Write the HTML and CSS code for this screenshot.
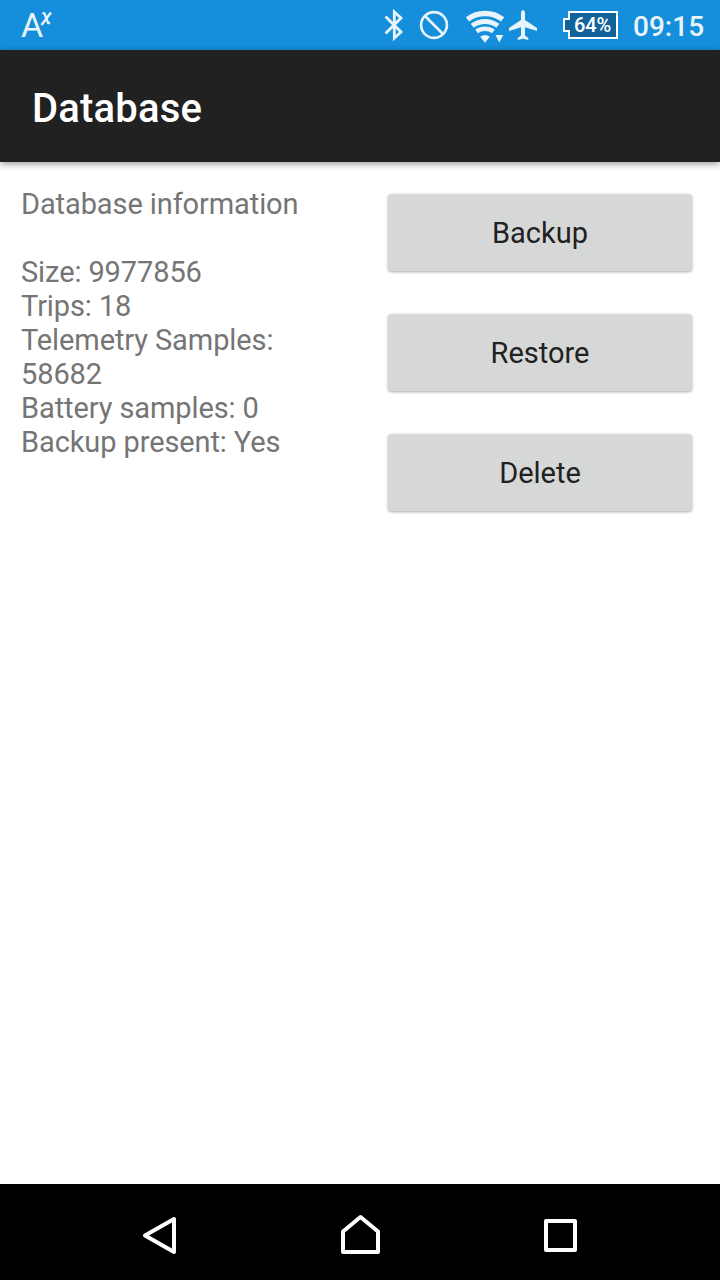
FILE: index.html
```
<!DOCTYPE html>
<html lang="en">
<head>
    <meta charset="UTF-8">
    <meta name="viewport" content="width=device-width, initial-scale=1.0">
    <title>Database</title>
    <link rel="stylesheet" href="styles.css">
</head>
<body>

<!-- Status Bar -->
<div class="statusbar">
    <svg class="notification" width="34" height="50" viewBox="0 0 34 50">
        <text class="letter" x="0" y="37">A</text>
        <path class="mark" d="M21.5 12.8 L23.5 13.5 L27 22.8 L29 23.2 M30 12.5 L20.5 25"/>
    </svg>
    <svg class="bluetooth" width="20" height="50" viewBox="0 0 20 50">
        <path d="M1.5 16.5 L17 32 L10.3 38 V12 L17 18 L1.5 33.5"/>
    </svg>
    <svg class="blocked" width="30" height="50" viewBox="0 0 30 50">
        <circle cx="15" cy="25" r="12.9"/>
        <path d="M6 16 L24 34"/>
    </svg>
    <svg class="wifi" width="40" height="50" viewBox="0 0 40 50">
        <path class="arc" stroke-width="5.4" d="M2.4 19.4 A29.2 29.2 0 0 1 37.6 19.4"/>
        <path class="arc" stroke-width="5" d="M7.2 25.7 A21.3 21.3 0 0 1 32.8 25.7"/>
        <path class="arc" stroke-width="4.6" d="M11.6 31.5 A14 14 0 0 1 28.4 31.5"/>
        <path d="M20 42.7 L15.2 36.8 A7.7 7.7 0 0 1 24.8 36.8 Z"/>
        <path d="M30.5 35 H38.2 L34.3 42.5 Z"/>
    </svg>
    <svg class="plane" width="30" height="50" viewBox="0 0 30 50">
        <path d="M13 12 Q15 8 17 12 V20 L29 28 V31 L17 27.3 V35.5 L20.3 38 V40 L15 38.8 L9.7 40 V38 L13 35.5 V27.3 L1 31 V28 L13 20 Z"/>
    </svg>
    <svg class="battery" width="56" height="50" viewBox="0 0 56 50">
        <path d="M6 12 H54 V38 H6 V31 H1 V19 H6 Z"/>
        <text x="29.5" y="32">64%</text>
    </svg>
    <span class="clock">09:15</span>
</div>

<!-- Title Bar -->
<div class="toolbar">
    <h1>Database</h1>
</div>

<!-- Database Section -->
<div class="container">
    <div class="info">
        Database information<br>
        <br>
        Size: 9977856<br>
        Trips: 18<br>
        Telemetry Samples: 58682<br>
        Battery samples: 0<br>
        Backup present: Yes
    </div>
    <div class="actions">
        <button class="btn">Backup</button>
        <button class="btn">Restore</button>
        <button class="btn">Delete</button>
    </div>
</div>

<!-- Navigation Bar -->
<div class="navbar">
    <svg width="40" height="44" viewBox="0 0 40 44">
        <path d="M34 6 V39 L5 22.5 Z"/>
    </svg>
    <svg width="40" height="44" viewBox="0 0 40 44">
        <path d="M3 18.5 L20.5 4 L38 18.5 V39 H3 Z"/>
    </svg>
    <svg width="40" height="44" viewBox="0 0 40 44">
        <path d="M6 8 H35 V37 H6 Z"/>
    </svg>
</div>

</body>
</html>
```

FILE: styles.css
```
body {
    font-family: Roboto, sans-serif;
    background-color: white;
    margin: 0;
    height: 1280px;
    display: flex;
    flex-direction: column;
    overflow: hidden;
}

.statusbar {
    display: flex;
    height: 50px;
    background-color: #158edb;
    color: #e8f4fc;
}
.statusbar svg {
    flex: none;
    fill: #e8f4fc;
}
.statusbar .notification {
    margin-left: 21px;
    margin-right: auto;
}
.notification .letter {
    font-size: 34px;
}
.notification .mark {
    fill: none;
    stroke: #e8f4fc;
    stroke-width: 2.4;
}
.statusbar .bluetooth {
    fill: none;
    stroke: #e8f4fc;
    stroke-width: 2.8;
    margin-right: 15px;
}
.statusbar .blocked {
    fill: none;
    stroke: #e8f4fc;
    stroke-width: 2.6;
    margin-right: 16px;
}
.wifi {
    margin-right: 3px;
}
.wifi .arc {
    fill: none;
    stroke: #e8f4fc;
}
.plane {
    margin-right: 25px;
}
.battery {
    margin-right: 14px;
}
.battery path {
    fill: #11639a;
    stroke: white;
    stroke-width: 2;
}
.battery text {
    fill: white;
    font-size: 20px;
    font-weight: 500;
    letter-spacing: -0.2px;
    text-anchor: middle;
}
.clock {
    width: 87px;
    font-size: 28px;
    font-weight: 500;
    line-height: 53px;
}

.toolbar {
    display: flex;
    align-items: center;
    height: 112px;
    padding: 0 32px;
    background-color: #212121;
    box-shadow: 0 2px 7px rgba(0,0,0,0.4);
}
.toolbar h1 {
    margin: 0;
    padding-top: 4px;
    color: white;
    font-size: 40px;
    font-weight: 500;
    letter-spacing: 0.2px;
}

.container {
    flex: 1;
    display: flex;
}
.info {
    width: 300px;
    padding: 25px 0 0 21px;
    color: #757575;
    font-size: 29px;
    line-height: 34px;
    letter-spacing: -0.1px;
}
.actions {
    display: flex;
    flex-direction: column;
    gap: 43px;
    width: 304px;
    margin-left: 67px;
    padding-top: 32px;
}
.btn {
    height: 77px;
    padding: 1px 0 0;
    border: none;
    border-radius: 4px;
    background-color: #d6d8d7;
    color: #212121;
    font-family: inherit;
    font-size: 29px;
    box-shadow: 0 1px 3px rgba(0,0,0,0.35);
}

.navbar {
    display: flex;
    justify-content: center;
    align-items: center;
    gap: 160px;
    height: 96px;
    background-color: black;
}
.navbar svg {
    margin-top: 6px;
    fill: none;
    stroke: white;
    stroke-width: 4;
    stroke-linejoin: round;
}
```
